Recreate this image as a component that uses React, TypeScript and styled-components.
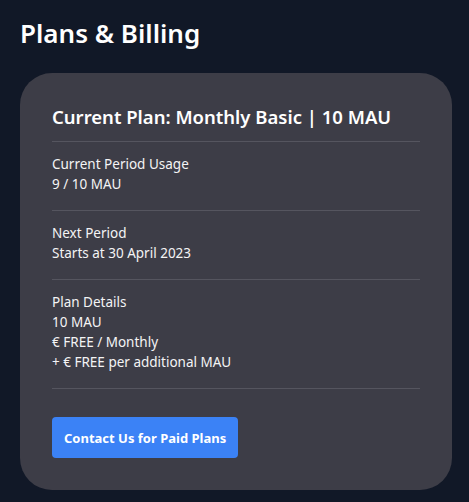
import React from 'react'
import styled, { createGlobalStyle } from 'styled-components'

const GlobalStyle = createGlobalStyle`
  html, body {
    margin: 0;
    background: #111827;
  }
  body {
    font-family: 'Noto Sans', 'Open Sans', sans-serif;
    color: #f4f4f5;
  }
`

// 페이지 전체
const Page = styled.div`
  min-height: 502px;
  box-sizing: border-box;
  padding: 14px 17px 12px 20px;
  background: #111827;
`

const Title = styled.h1`
  margin: 0 0 21px;
  font-size: 26px;
  line-height: 38px;
  font-weight: 600;
  color: #ffffff;
`

// 요금제 카드
const Card = styled.section`
  background: #3d3d47;
  border-radius: 32px;
  padding: 32px;
`

const CardHeading = styled.h2`
  margin: 0;
  padding-bottom: 12px;
  font-size: 18.5px;
  line-height: 24px;
  font-weight: 600;
  color: #ffffff;
  border-bottom: 1px solid #55555f;
`

const Section = styled.div`
  padding: 12px 0 16px;
  border-bottom: 1px solid #55555f;
  font-size: 13.5px;
  line-height: 20px;
  color: #f4f4f5;
`

const Line = styled.div`
  white-space: nowrap;
`

const Actions = styled.div`
  padding-top: 28px;
`

const PrimaryButton = styled.button`
  border: none;
  border-radius: 4px;
  background: #3b82f6;
  color: #ffffff;
  font-family: inherit;
  font-size: 13px;
  font-weight: 700;
  height: 41px;
  padding: 0 12px;
  cursor: pointer;
`

const sections: string[][] = [
  ['Current Period Usage', '9 / 10 MAU'],
  ['Next Period', 'Starts at 30 April 2023'],
  ['Plan Details', '10 MAU', '€ FREE / Monthly', '+ € FREE per additional MAU'],
]

export default function App() {
  return (
    <Page>
      <GlobalStyle />
      <Title>Plans &amp; Billing</Title>
      <Card>
        <CardHeading>Current Plan: Monthly Basic | 10 MAU</CardHeading>
        {sections.map((lines, i) => (
          <Section key={i}>
            {lines.map((l) => (
              <Line key={l}>{l}</Line>
            ))}
          </Section>
        ))}
        <Actions>
          <PrimaryButton>Contact Us for Paid Plans</PrimaryButton>
        </Actions>
      </Card>
    </Page>
  )
}
